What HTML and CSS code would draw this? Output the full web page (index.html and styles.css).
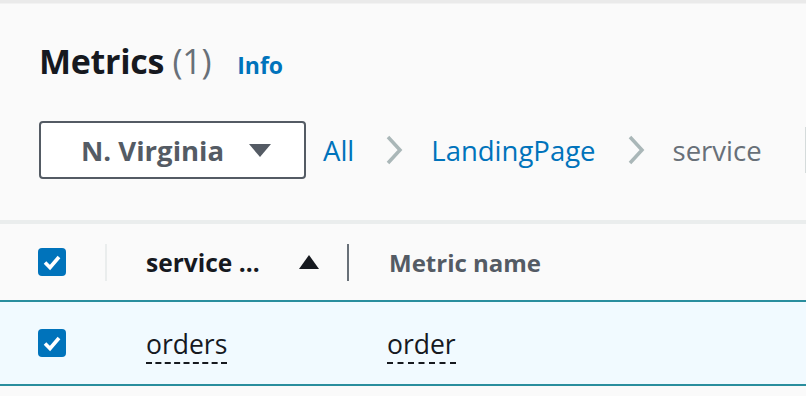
FILE: index.html
```html
<!DOCTYPE html>
<html>
<head>
<meta charset="utf-8">
<link rel="stylesheet" href="styles.css">
</head>
<body>
<div class="topbar"></div>
<div class="panel">
  <div class="title-row">
    <h2 class="title">Metrics <span class="count">(1)</span></h2>
    <a class="info">Info</a>
  </div>
  <div class="filter-row">
    <div class="region">
      <span class="region-label">N. Virginia</span>
      <svg class="caret" width="22" height="13" viewBox="0 0 22 13"><path d="M0 0H22L11 13Z" fill="#545b64"/></svg>
    </div>
    <nav class="crumbs">
      <a class="crumb link">All</a>
      <svg class="chev" width="18" height="30" viewBox="0 0 18 30"><path d="M3 2L15 15L3 28" fill="none" stroke="#aab7b8" stroke-width="3.5"/></svg>
      <a class="crumb link">LandingPage</a>
      <svg class="chev" width="18" height="30" viewBox="0 0 18 30"><path d="M3 2L15 15L3 28" fill="none" stroke="#aab7b8" stroke-width="3.5"/></svg>
      <span class="crumb current">service</span>
    </nav>
    <div class="vline"></div>
  </div>
</div>
<div class="sep"></div>
<div class="table">
  <div class="row head">
    <div class="cell check">
      <span class="cb"><svg width="28" height="28" viewBox="0 0 28 28"><path d="M7 14.5L12 19.5L21 9" fill="none" stroke="#fff" stroke-width="3.6"/></svg></span>
    </div>
    <div class="hdiv light"></div>
    <div class="cell col1 th">
      <span class="thtext">service …</span>
      <svg class="sort" width="20" height="14" viewBox="0 0 20 14"><path d="M10 0L20 14H0Z" fill="#16191f"/></svg>
    </div>
    <div class="hdiv dark"></div>
    <div class="cell col2 th muted">Metric name</div>
  </div>
  <div class="row sel">
    <div class="cell check">
      <span class="cb"><svg width="28" height="28" viewBox="0 0 28 28"><path d="M7 14.5L12 19.5L21 9" fill="none" stroke="#fff" stroke-width="3.6"/></svg></span>
    </div>
    <div class="cell col1 td"><span class="dash">orders</span></div>
    <div class="cell col2 td"><span class="dash">order</span></div>
  </div>
</div>
</body>
</html>
```
FILE: styles.css
```css
html, body {
  margin: 0;
  padding: 0;
}
body {
  background: #fafafa;
  font-family: "Open Sans", "Noto Sans", sans-serif;
  color: #16191f;
  width: 806px;
  height: 396px;
  overflow: hidden;
}
.topbar {
  height: 3px;
  background: #eaeaea;
  border-bottom: 1px solid #f2f2f2;
}
.panel {
  padding-left: 39px;
  height: 216px;
  box-sizing: border-box;
}
.title-row {
  display: flex;
  align-items: baseline;
  height: 96px;
  box-sizing: border-box;
  padding-top: 36px;
}
.title {
  margin: 0;
  font-size: 34px;
  font-weight: 700;
  line-height: 42px;
  letter-spacing: -0.3px;
}
.count {
  font-weight: 400;
  color: #687078;
}
.info {
  margin-left: 26px;
  font-size: 23px;
  font-weight: 700;
  color: #0073bb;
}
.filter-row {
  display: flex;
  align-items: center;
  margin-top: 21px;
  height: 58px;
}
.filter-row > * {
  flex-shrink: 0;
}
.region {
  width: 267px;
  height: 58px;
  box-sizing: border-box;
  border: 2px solid #545b64;
  border-radius: 4px;
  background: #fff;
  display: flex;
  align-items: center;
  padding-left: 40px;
}
.region-label {
  font-size: 27.5px;
  font-weight: 700;
  color: #545b64;
}
.caret {
  margin-left: 25px;
}
.crumbs {
  display: flex;
  align-items: center;
  margin-left: 17px;
}
.crumbs > * {
  flex-shrink: 0;
}
.crumb {
  font-size: 27.5px;
}
.link {
  color: #0073bb;
}
.current {
  color: #687078;
}
.chev {
  margin: 0 28px 0 31px;
}
.vline {
  margin-left: 43px;
  width: 2px;
  height: 46px;
  background: #d5dbdb;
}
.sep {
  height: 4px;
  background: #eaeded;
}
.row {
  display: flex;
  align-items: center;
}
.head {
  height: 76px;
  background: #fafafa;
}
.sel {
  height: 82px;
  background: #f1faff;
  border-top: 2px solid #2a8e9e;
  border-bottom: 2px solid #2a8e9e;
}
.check {
  width: 105px;
  padding-left: 38px;
  box-sizing: border-box;
  display: flex;
}
.cb {
  width: 28px;
  height: 28px;
  border-radius: 4px;
  background: #0073bb;
  display: block;
}
.cb svg {
  display: block;
}
.hdiv {
  width: 2px;
  height: 37px;
}
.hdiv.light {
  background: #eaeded;
}
.hdiv.dark {
  background: #687078;
}
.col1 {
  width: 240px;
  padding-left: 39px;
  box-sizing: border-box;
  display: flex;
  align-items: center;
}
.thtext {
  width: 153px;
  white-space: nowrap;
}
.col2 {
  padding-left: 40px;
}
.sel .col1 {
  width: 347px;
  padding-left: 146px;
  margin-left: -105px;
}
.th {
  font-size: 24.5px;
  font-weight: 700;
}
.muted {
  color: #545b64;
  font-size: 24px;
}
.td {
  font-size: 26.5px;
  display: flex;
  align-items: center;
  padding-top: 4px;
}
.dash {
  border-bottom: 2px dashed #16191f;
  padding-bottom: 1px;
  line-height: 34px;
}
```
